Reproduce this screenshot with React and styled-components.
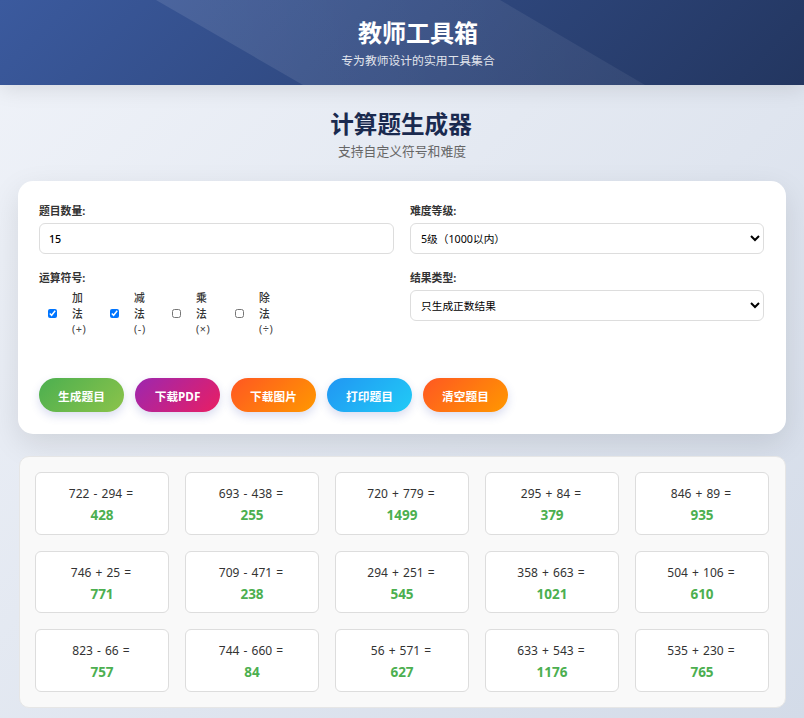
import React from "react";
import styled, { createGlobalStyle } from "styled-components";

const FONT = `"Noto Sans", "Noto Sans CJK SC", sans-serif`;

const Global = createGlobalStyle`
  * { box-sizing: border-box; }
  html, body { margin: 0; padding: 0; }
  body {
    font-family: ${FONT};
    color: #333;
    min-height: 718px;
    background: linear-gradient(135deg, #f0f3f9 0%, #d3dbe8 100%);
    overflow: hidden;
  }
`;

const Header = styled.header`
  position: relative;
  height: 85px;
  padding: 17px 0 0 32px;
  text-align: center;
  color: #fff;
  background: linear-gradient(135deg, #3b5a9e 0%, #233660 100%);
  box-shadow: 0 4px 20px rgba(0, 0, 0, 0.1);
  overflow: hidden;
  &::before {
    content: "";
    position: absolute;
    inset: 0;
    background: linear-gradient(90deg, rgba(255, 255, 255, 0.1) 20%, rgba(255, 255, 255, 0.06) 80%);
    clip-path: polygon(156px 0, 500px 0, 645px 85px, 303px 85px);
  }
`;
const HeaderTitle = styled.h1`
  position: relative;
  margin: 0;
  font-size: 24px;
  line-height: 32px;
  font-weight: 700;
`;
const HeaderSub = styled.p`
  position: relative;
  margin: 3px 0 0;
  font-size: 11.8px;
  line-height: 17px;
  opacity: 0.85;
`;

const Main = styled.main`
  padding: 0 18px;
`;
const PageHead = styled.div`
  padding-top: 22px;
  text-align: center;
`;
const PageTitle = styled.h2`
  margin: 0;
  padding-right: 2px;
  font-size: 23.6px;
  line-height: 34px;
  font-weight: 700;
  color: #1a2a4f;
`;
const PageSub = styled.p`
  margin: 2px 0 0;
  font-size: 12.8px;
  line-height: 17px;
  color: #666;
`;

const FormCard = styled.section`
  margin-top: 21px;
  height: 253px;
  padding: 21px;
  background: #fff;
  border-radius: 15px;
  box-shadow: 0 10px 30px rgba(0, 0, 0, 0.1);
`;
const FormGrid = styled.div`
  display: grid;
  grid-template-columns: 355px 354px;
  gap: 16px;
  height: 155px;
  grid-template-rows: 51px auto;
`;
const Field = styled.div``;
const Label = styled.label`
  display: block;
  padding-top: 1px;
  font-size: 10.8px;
  line-height: 15px;
  font-weight: 700;
  color: #333;
  margin-bottom: 5px;
`;
const TextInput = styled.input`
  display: block;
  width: 100%;
  height: 31px;
  padding: 0 9px;
  border: 1px solid #ddd;
  border-radius: 6px;
  font: 500 10.7px ${FONT};
  color: #000;
  background: #fff;
`;
const Select = styled.select`
  display: block;
  width: 100%;
  height: 31px;
  padding: 0 6px;
  border: 1px solid #ddd;
  border-radius: 6px;
  font: 400 10.7px ${FONT};
  color: #000;
  background-color: #fff;
`;
const Checks = styled.div`
  display: flex;
  padding-left: 9px;
`;
const CheckItem = styled.label`
  display: flex;
  align-items: center;
  gap: 15px;
  margin-right: ${(p) => p.$gap}px;
`;
const CheckBox = styled.input`
  appearance: auto;
  width: 9px;
  height: 9px;
  margin: 0;
  flex: none;
`;
const CheckText = styled.span`
  width: 16px;
  font-size: 10.8px;
  line-height: 15.5px;
  color: #333;
  font-weight: 500;
  word-break: break-all;
`;
const Sym = styled.span`
  display: block;
  white-space: nowrap;
  font-weight: 400;
  letter-spacing: 0.6px;
  color: #444;
`;

const Actions = styled.div`
  display: flex;
  gap: 11px;
  margin-top: 21px;
`;
const Button = styled.button`
  width: 85px;
  height: 34px;
  padding: 0;
  border: 0;
  border-radius: 17px;
  font: 700 11.7px ${FONT};
  color: #fff;
  background: linear-gradient(135deg, ${(p) => p.$from}, ${(p) => p.$to});
  box-shadow: 0 4px 10px rgba(63, 81, 181, 0.2);
`;

const Results = styled.section`
  margin: 22px 0 0 1px;
  padding: 15px;
  height: 252px;
  display: grid;
  grid-template-columns: repeat(5, 134px);
  grid-auto-rows: 62.5px;
  gap: 16px;
  background: #f9f9f9;
  border: 1px solid #e6e6e6;
  border-radius: 10px;
`;
const Problem = styled.div`
  display: flex;
  flex-direction: column;
  align-items: center;
  padding-top: 12px;
  background: #fff;
  border: 1px solid #ddd;
  border-radius: 6px;
`;
const Expr = styled.div`
  font-size: 12px;
  line-height: 17px;
  word-spacing: 1px;
  color: #333;
  transform: translateX(-1px);
`;
const Answer = styled.div`
  margin-top: 4px;
  font-size: 13.5px;
  line-height: 19px;
  font-weight: 700;
  color: #4caf50;
`;

const problems = [
  ["722 - 294 =", "428"], ["693 - 438 =", "255"], ["720 + 779 =", "1499"], ["295 + 84 =", "379"], ["846 + 89 =", "935"],
  ["746 + 25 =", "771"], ["709 - 471 =", "238"], ["294 + 251 =", "545"], ["358 + 663 =", "1021"], ["504 + 106 =", "610"],
  ["823 - 66 =", "757"], ["744 - 660 =", "84"], ["56 + 571 =", "627"], ["633 + 543 =", "1176"], ["535 + 230 =", "765"],
];
const ops = [
  ["加法", "(+)", true, 22],
  ["减法", "(-)", true, 22],
  ["乘法", "(×)", false, 23],
  ["除法", "(÷)", false, 0],
];
const buttons = [
  ["生成题目", "#4caf50", "#8bc34a"],
  ["下载PDF", "#9c27b0", "#e91e63"],
  ["下载图片", "#ff5722", "#ff9800"],
  ["打印题目", "#2196f3", "#21cbf6"],
  ["清空题目", "#ff5722", "#ff9800"],
];

export default function App() {
  return (
    <>
      <Global />
      <Header>
        <HeaderTitle>教师工具箱</HeaderTitle>
        <HeaderSub>专为教师设计的实用工具集合</HeaderSub>
      </Header>
      <Main>
        <PageHead>
          <PageTitle>计算题生成器</PageTitle>
          <PageSub>支持自定义符号和难度</PageSub>
        </PageHead>
        <FormCard>
          <FormGrid>
            <Field>
              <Label>题目数量:</Label>
              <TextInput type="number" defaultValue="15" />
            </Field>
            <Field>
              <Label>难度等级:</Label>
              <Select defaultValue="5"><option value="5">5级（1000以内）</option></Select>
            </Field>
            <Field>
              <Label>运算符号:</Label>
              <Checks>
                {ops.map(([t, s, c, g]) => (
                  <CheckItem key={t} $gap={g}>
                    <CheckBox type="checkbox" defaultChecked={c} />
                    <CheckText>{t}<Sym>{s}</Sym></CheckText>
                  </CheckItem>
                ))}
              </Checks>
            </Field>
            <Field>
              <Label>结果类型:</Label>
              <Select defaultValue="p"><option value="p">只生成正数结果</option></Select>
            </Field>
          </FormGrid>
          <Actions>
            {buttons.map(([t, a, b]) => (
              <Button key={t} $from={a} $to={b}>{t}</Button>
            ))}
          </Actions>
        </FormCard>
        <Results>
          {problems.map(([e, a]) => (
            <Problem key={e}>
              <Expr>{e}</Expr>
              <Answer>{a}</Answer>
            </Problem>
          ))}
        </Results>
      </Main>
    </>
  );
}
